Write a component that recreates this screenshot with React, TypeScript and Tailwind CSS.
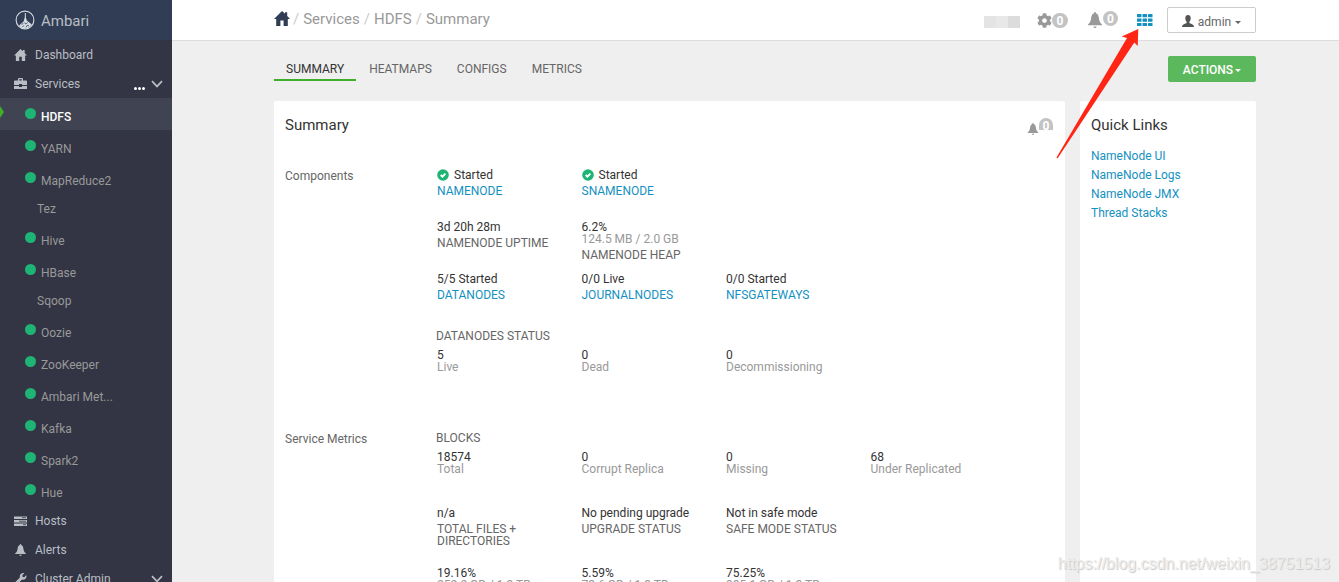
import React from 'react';
import { FaCog, FaWrench } from 'react-icons/fa';

interface IconProps {
  className?: string;
}

interface Metric {
  value: string;
  sub?: string;
  label?: string;
  link?: boolean;
  ok?: boolean;
}

const HomeIcon: React.FC<IconProps> = ({ className }) => (
  <svg viewBox="0 0 16 15" className={className} fill="currentColor" aria-hidden="true">
    <path d="M8 0 L11 2.8 V1.2 H13.2 V5 L16 8 H13.8 V15 H9.6 V9.6 H6.4 V15 H2.2 V8 H0 Z" />
  </svg>
);

const BriefcaseIcon: React.FC<IconProps> = ({ className }) => (
  <svg viewBox="0 0 13 12" className={className} fill="currentColor" aria-hidden="true">
    <path d="M4 2.5 V1 Q4 0 5 0 H8 Q9 0 9 1 V2.5 H12 Q13 2.5 13 3.5 V7 H8 V6 H5 V7 H0 V3.5 Q0 2.5 1 2.5 Z M5.2 2.5 H7.8 V1.2 H5.2 Z" fillRule="evenodd" />
    <path d="M0 8 H5 V9 H8 V8 H13 V11 H0 Z" />
  </svg>
);

const BellIcon: React.FC<IconProps> = ({ className }) => (
  <svg viewBox="0 0 14 16" className={className} fill="currentColor" aria-hidden="true">
    <path d="M6 1.2 Q6 0 7 0 Q8 0 8 1.2 Q10.4 2 10.7 5 Q11 9 12.2 10.5 L14 12.4 V13.2 H0 V12.4 L1.8 10.5 Q3 9 3.3 5 Q3.6 2 6 1.2 Z" />
    <path d="M5.4 14.4 H8.6 Q8.3 16 7 16 Q5.7 16 5.4 14.4 Z" />
  </svg>
);

const HostsIcon: React.FC<IconProps> = ({ className }) => (
  <svg viewBox="0 0 13 10" className={className} aria-hidden="true">
    <path d="M0 0.5 H13 V3 H0 Z M0 4 H13 V6.5 H0 Z M0 7.5 H13 V10 H0 Z" fill="currentColor" />
    <path d="M8 1.7 H12 M5 5.2 H12 M9 8.7 H12" stroke="#333544" strokeWidth="0.8" />
  </svg>
);

const UserIcon: React.FC<IconProps> = ({ className }) => (
  <svg viewBox="0 0 12 12" className={className} fill="currentColor" aria-hidden="true">
    <path d="M6 0 C7.9 0 8.8 1.3 8.7 3.2 C8.7 4.8 8.2 5.8 7.4 6.7 V8 C8.5 8.8 11 9.3 11.6 10.4 Q12 11 12 12 H0 Q0 11 0.4 10.4 C1 9.3 3.5 8.8 4.6 8 V6.7 C3.8 5.8 3.3 4.8 3.3 3.2 C3.2 1.3 4.1 0 6 0 Z" />
  </svg>
);

const GridIcon: React.FC<IconProps> = ({ className }) => (
  <svg viewBox="0 0 16 12" className={className} fill="currentColor" aria-hidden="true">
    {[0, 4.5, 9].map((y) =>
      [0, 5.5, 11].map((x) => <rect key={`${x}-${y}`} x={x} y={y} width="4.5" height="3.3" rx="0.5" />)
    )}
  </svg>
);

const CheckIcon: React.FC<IconProps> = ({ className }) => (
  <svg viewBox="0 0 12 12" className={className} aria-hidden="true">
    <circle cx="6" cy="6" r="5.8" fill="#1eb475" />
    <path d="M3.7 6 L5.4 7.6 L8.4 4.6" fill="none" stroke="#fff" strokeWidth="1.9" />
  </svg>
);

const ChevronIcon: React.FC<IconProps> = ({ className }) => (
  <svg viewBox="0 0 12 8" className={className} fill="none" stroke="currentColor" aria-hidden="true">
    <path d="M1 1.2 L6 6.4 L11 1.2" strokeWidth="1.7" />
  </svg>
);

const CaretIcon: React.FC<IconProps> = ({ className }) => (
  <svg viewBox="0 0 6 3" className={className} fill="currentColor" aria-hidden="true">
    <path d="M0 0 H6 L3 3 Z" />
  </svg>
);

const Logo: React.FC<IconProps> = ({ className }) => (
  <svg viewBox="0 0 20 20" className={className} fill="none" stroke="currentColor" aria-hidden="true">
    <circle cx="10" cy="10" r="8.9" strokeWidth="1.1" />
    <path d="M10.3 3 V7" strokeWidth="1" />
    <path d="M10.3 5.5 L11.8 10.5 L16.8 14.4 Q14 18.4 10 18.6 Q6 18.4 4 15.4 L8.6 11.5 Z" fill="currentColor" stroke="none" />
    <path d="M6.5 14.4 L8.4 13.4 M9.6 12.6 L10.6 14 L12.6 12.6 M7.6 17 L8.8 15.4 M11 17.4 L12.2 15.4 L14 15.8" stroke="#313d54" strokeWidth="0.8" />
  </svg>
);

const services = [
  { name: 'HDFS', status: true, active: true },
  { name: 'YARN', status: true },
  { name: 'MapReduce2', status: true },
  { name: 'Tez', status: false },
  { name: 'Hive', status: true },
  { name: 'HBase', status: true },
  { name: 'Sqoop', status: false },
  { name: 'Oozie', status: true },
  { name: 'ZooKeeper', status: true },
  { name: 'Ambari Met...', status: true },
  { name: 'Kafka', status: true },
  { name: 'Spark2', status: true },
  { name: 'Hue', status: true }
];

const tabs = ['SUMMARY', 'HEATMAPS', 'CONFIGS', 'METRICS'];

const quickLinks = ['NameNode UI', 'NameNode Logs', 'NameNode JMX', 'Thread Stacks'];

const componentRows: Metric[][] = [
  [
    { value: 'Started', label: 'NAMENODE', link: true, ok: true },
    { value: 'Started', label: 'SNAMENODE', link: true, ok: true }
  ],
  [
    { value: '3d 20h 28m', label: 'NAMENODE UPTIME' },
    { value: '6.2%', sub: '124.5 MB / 2.0 GB', label: 'NAMENODE HEAP' }
  ],
  [
    { value: '5/5 Started', label: 'DATANODES', link: true },
    { value: '0/0 Live', label: 'JOURNALNODES', link: true },
    { value: '0/0 Started', label: 'NFSGATEWAYS', link: true }
  ]
];

const dataNodes: Metric[] = [
  { value: '5', sub: 'Live' },
  { value: '0', sub: 'Dead' },
  { value: '0', sub: 'Decommissioning' }
];

const blocks: Metric[] = [
  { value: '18574', sub: 'Total' },
  { value: '0', sub: 'Corrupt Replica' },
  { value: '0', sub: 'Missing' },
  { value: '68', sub: 'Under Replicated' }
];

const states: Metric[] = [
  { value: 'n/a', label: 'TOTAL FILES + DIRECTORIES' },
  { value: 'No pending upgrade', label: 'UPGRADE STATUS' },
  { value: 'Not in safe mode', label: 'SAFE MODE STATUS' }
];

const usage: Metric[] = [
  { value: '19.16%', sub: '252.2 GB / 1.3 TB' },
  { value: '5.59%', sub: '73.6 GB / 1.3 TB' },
  { value: '75.25%', sub: '985.1 GB / 1.3 TB' }
];

const MetricCell: React.FC<{ metric: Metric }> = ({ metric }) => (
  <div className="pr-4">
    <div className="flex items-center text-[#333]">
      {metric.ok && <CheckIcon className="w-3 h-3 mr-[5px]" />}
      {metric.value}
    </div>
    {metric.sub && <div className="text-[#999]">{metric.sub}</div>}
    {metric.label && (
      <div className="mt-1 text-[#666]">
        {metric.link ? (
          <a href="#" className="text-[#1491c1] hover:underline">{metric.label}</a>
        ) : (
          metric.label
        )}
      </div>
    )}
  </div>
);

const MetricRow: React.FC<{ metrics: Metric[]; className: string }> = ({ metrics, className }) => (
  <div className={`grid grid-cols-4 ${className}`}>
    {metrics.map((metric, i) => (
      <MetricCell key={i} metric={metric} />
    ))}
  </div>
);

const Sidebar: React.FC = () => (
  <aside className="w-[172px] shrink-0 bg-[#333544] text-[#b8bec4] overflow-hidden">
    <a href="#" className="flex items-center h-10 pl-[15px] bg-[#313d54] text-[15px]">
      <Logo className="w-5 h-5 mr-1.5 text-[#d5dbe2]" />
      <span className="pt-0.5">Ambari</span>
    </a>
    <nav>
      <a href="#" className="flex items-center h-[29px] pl-3.5">
        <HomeIcon className="w-[13px] h-3 mr-2" />
        Dashboard
      </a>
      <div className="flex items-center h-[29px] pl-3.5 pr-[9px]">
        <BriefcaseIcon className="w-[13px] h-3 mr-2" />
        <a href="#" className="flex-1">Services</a>
        <button type="button" aria-label="Service actions" className="flex gap-px pt-2.5 mr-1.5 text-white">
          <span className="w-[3px] h-[3px] rounded-xs bg-white" />
          <span className="w-[3px] h-[3px] rounded-xs bg-white" />
          <span className="w-[3px] h-[3px] rounded-xs bg-white" />
        </button>
        <button type="button" aria-label="Collapse services">
          <ChevronIcon className="w-3 h-2" />
        </button>
      </div>

      {/* Services */}
      <ul>
        {services.map((service) => (
          <li key={service.name}>
            <a
              href="#"
              className={`relative flex items-start ${service.status ? 'h-8 pl-[25px]' : 'h-7 pl-[37px]'} ${
                service.active ? 'bg-[#404351] text-white font-medium' : 'text-[#999]'
              }`}
            >
              {service.active && (
                <svg viewBox="0 0 4 12" className="absolute left-0 top-2 w-1 h-3" aria-hidden="true">
                  <path d="M0 0 L4 6 L0 12 Z" fill="#3fae2a" />
                </svg>
              )}
              {service.status && <span className="w-[11px] h-[11px] mt-2.5 mr-[5px] rounded-full bg-[#1eb475]" />}
              <span className={service.status ? 'mt-[13px]' : 'mt-[9px]'}>{service.name}</span>
            </a>
          </li>
        ))}
      </ul>

      <a href="#" className="flex items-center h-[29px] pl-3.5">
        <HostsIcon className="w-[13px] h-2.5 mr-2" />
        Hosts
      </a>
      <a href="#" className="flex items-center h-[29px] pl-3.5">
        <BellIcon className="w-[13px] h-3 mr-2" />
        Alerts
      </a>
      <div className="flex items-center h-[29px] pl-3.5 pr-[9px]">
        <FaWrench className="w-[13px] h-3 mr-2" />
        <a href="#" className="flex-1">Cluster Admin</a>
        <button type="button" aria-label="Expand cluster admin">
          <ChevronIcon className="w-3 h-2" />
        </button>
      </div>
    </nav>
  </aside>
);

const Header: React.FC = () => (
  <header className="flex items-center justify-between h-[41px] pl-[102px] pr-[83px] bg-white border-b border-[#ddd]">
    <nav aria-label="Breadcrumb" className="flex items-center gap-1 pb-0.5 text-[15px] text-[#999]">
      <a href="#" aria-label="Home">
        <HomeIcon className="w-4 h-[15px] -mr-px mb-0.5 text-[#313d54]" />
      </a>
      <span className="text-[#ccc]">/</span>
      <a href="#">Services</a>
      <span className="text-[#ccc]">/</span>
      <a href="#">HDFS</a>
      <span className="text-[#ccc]">/</span>
      <span>Summary</span>
    </nav>

    <div className="flex items-center">
      <div className="flex mr-[17px] mt-1">
        <span className="w-3 h-3 bg-[#e4e4e4]" />
        <span className="w-3 h-3 bg-[#e8e8e8]" />
        <span className="w-3 h-3 bg-[#dcdcdc]" />
      </div>
      <button type="button" className="flex items-center mr-5 text-[#999]" aria-label="Background operations">
        <FaCog className="w-[15px] h-[15px]" />
        <span className="w-4 h-[15px] rounded-full bg-[#c3c3c3] text-white font-bold leading-4">0</span>
      </button>
      <button type="button" className="flex items-center mr-[19px] pb-1 text-[#999]" aria-label="Alerts">
        <BellIcon className="w-3.5 h-4 mt-1 mr-px" />
        <span className="w-[15px] h-[15px] rounded-full bg-[#c3c3c3] text-white font-bold leading-4">0</span>
      </button>
      <button type="button" className="mr-3.5 text-[#1491c1]" aria-label="Views">
        <GridIcon className="w-4 h-3" />
      </button>
      <button
        type="button"
        className="flex items-center justify-center w-[89px] h-[26px] pt-1 rounded-xs border border-[#ccc] text-[#666]"
      >
        <UserIcon className="w-3 h-3 mr-1 mb-0.5 text-[#555]" />
        admin
        <CaretIcon className="w-1.5 h-[3px] ml-1" />
      </button>
    </div>
  </header>
);

export default function App() {
  return (
    <div className="relative flex h-screen overflow-hidden bg-[#efefef] text-xs leading-3 font-[Roboto,'Liberation_Sans',sans-serif]">
      <Sidebar />

      <div className="flex flex-col flex-1 min-w-0">
        <Header />

        <main className="flex flex-col flex-1 min-h-0 pl-[102px] pr-[83px] pt-[15px]">
          {/* Tabs */}
          <div className="flex items-start justify-between mb-[19px]">
            <nav className="flex gap-px">
              {tabs.map((tab, i) => (
                <a
                  key={tab}
                  href="#"
                  className={`h-[25px] px-3 pt-[7px] border-b-2 ${
                    i === 0 ? 'border-[#3fae2a] text-[#333]' : 'border-transparent text-[#666]'
                  }`}
                >
                  {tab}
                </a>
              ))}
            </nav>
            <button
              type="button"
              className="flex items-center justify-center w-[88px] h-[26px] pt-0.5 rounded-xs bg-[#5cb85c] text-white font-medium"
            >
              ACTIONS
              <CaretIcon className="w-1.5 h-[3px] ml-0.5" />
            </button>
          </div>

          <div className="flex flex-1 min-h-0 gap-[15px]">
            {/* Summary */}
            <section className="flex-1 min-w-0 px-[11px] pt-4 rounded-t-xs bg-white overflow-hidden">
              <div className="flex justify-between h-[51px]">
                <h1 className="text-[15px] leading-4 text-[#333]">Summary</h1>
                <button type="button" className="flex items-start h-5 mr-px text-[#999]" aria-label="HDFS alerts">
                  <BellIcon className="w-3 h-3 mt-1.5" />
                  <span className="w-3.5 h-3 mt-px rounded-t-full bg-[#c3c3c3] text-white font-bold leading-4 overflow-hidden">0</span>
                </button>
              </div>

              <div className="flex h-[263px]">
                <h2 className="w-[152px] pt-0.5 text-[#666]">Components</h2>
                <div className="flex-1 pr-[39px] pt-px">
                  {componentRows.map((row, i) => (
                    <MetricRow key={i} metrics={row} className="min-h-[52px]" />
                  ))}
                  <h3 className="-ml-px pt-[5px] pb-[7px] text-[#666]">DATANODES STATUS</h3>
                  <MetricRow metrics={dataNodes} className="min-h-6" />
                </div>
              </div>

              <div className="flex">
                <h2 className="w-[152px] pt-0.5 text-[#666]">Service Metrics</h2>
                <div className="flex-1 pr-[39px] pt-px">
                  <h3 className="-ml-px pb-[7px] text-[#666]">BLOCKS</h3>
                  <MetricRow metrics={blocks} className="min-h-14" />
                  <MetricRow metrics={states} className="min-h-[60px]" />
                  <MetricRow metrics={usage} className="min-h-[60px]" />
                </div>
              </div>
            </section>

            {/* Quick links */}
            <section className="w-44 px-[11px] pt-4 rounded-t-xs bg-white">
              <h2 className="mb-3.5 text-[15px] leading-4 text-[#333]">Quick Links</h2>
              <ul>
                {quickLinks.map((link) => (
                  <li key={link} className="leading-[19px]">
                    <a href="#" className="text-[#1491c1] hover:underline">{link}</a>
                  </li>
                ))}
              </ul>
            </section>
          </div>
        </main>
      </div>

      {/* Arrow to the views menu */}
      <svg viewBox="0 0 83 131" className="absolute top-[28px] right-[200px] w-[83px] h-[131px] pointer-events-none" aria-hidden="true">
        <path d="M82.3 1 L65.7 8.5 L71 10 L0.5 129.5 L1.5 130.5 L78.3 14.5 L81.7 18 Z" fill="#ff2616" />
      </svg>

      <div className="absolute right-[9px] bottom-2 font-['Liberation_Sans',sans-serif] text-base leading-5 text-[#ececec] [text-shadow:1px_1px_1px_#c8c8c8] pointer-events-none">
        https://blog.csdn.net/weixin_38751513
      </div>
    </div>
  );
}
